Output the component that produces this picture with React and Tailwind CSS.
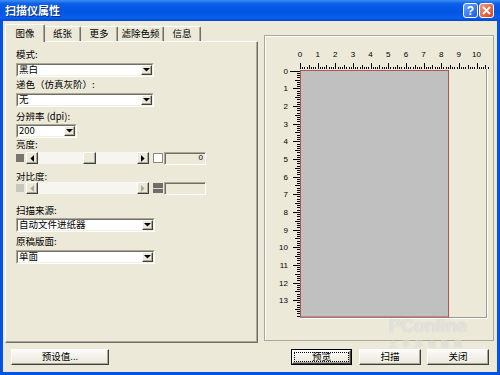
import React from "react";

const raised =
  "border border-t-white border-l-white border-r-[#404040] border-b-[#404040] shadow-[inset_-1px_-1px_0_#aca899]";
const sunken =
  "border border-t-[#aca899] border-l-[#aca899] border-r-white border-b-white shadow-[inset_1px_1px_0_#716f64]";

const Down = () => (
  <svg width="7" height="4" viewBox="0 0 7 4">
    <path d="M0 0h7L3.5 3.6z" fill="#000" />
  </svg>
);
const Left = ({ c }) => (
  <svg width="4" height="7" viewBox="0 0 4 7">
    <path d="M4 0v7L0.4 3.5z" fill={c} />
  </svg>
);
const Right = ({ c }) => (
  <svg width="4" height="7" viewBox="0 0 4 7">
    <path d="M0 0v7L3.6 3.5z" fill={c} />
  </svg>
);

function Select({ className, value }) {
  return (
    <div
      className={`h-[14px] border border-t-[#aca899] border-l-[#aca899] border-r-white border-b-white ${className}`}
    >
      <div className="h-full flex bg-white border border-t-[#716f64] border-l-[#716f64] border-r-[#f1efe2] border-b-[#f1efe2]">
        <div className="flex-1 flex items-center pl-[1px] text-[9.5px] leading-none text-black">
          {value}
        </div>
        <div
          className={`w-[11px] h-full flex items-center justify-center bg-[#ece9d8] ${raised}`}
        >
          <Down />
        </div>
      </div>
    </div>
  );
}

function Label({ className, children }) {
  return (
    <div className={`h-[12px] leading-[12px] text-[9.5px] text-black ${className}`}>
      {children}
    </div>
  );
}

function Slider({ disabled, className }) {
  const arrow = disabled ? "#aca899" : "#000";
  return (
    <div className={`flex items-center h-[12px] ${className}`}>
      <div
        className={`w-[8px] h-[8px] ${disabled ? "bg-[#c9c7bc]" : "bg-[#77756c]"}`}
      />
      <div
        className={`ml-[2px] w-[12px] h-[12px] flex items-center justify-center bg-[#ece9d8] ${raised}`}
      >
        <Left c={arrow} />
      </div>
      <div className="w-[99px] h-[12px] bg-[#f6f5f0] flex">
        {!disabled && (
          <div className={`ml-[45px] w-[13px] h-full bg-[#ece9d8] ${raised}`} />
        )}
      </div>
      <div
        className={`w-[12px] h-[12px] flex items-center justify-center bg-[#ece9d8] ${raised}`}
      >
        <Right c={arrow} />
      </div>
      {disabled ? (
        <div className="ml-[4px] w-[10px] h-[10px] bg-[#6f6d66] flex flex-col justify-center">
          <div className="h-[1px] bg-[#d6d4ca]" />
        </div>
      ) : (
        <div className="ml-[4px] w-[10px] h-[10px] bg-white border border-[#8c8a80]" />
      )}
      <div
        className={`ml-[1px] w-[42px] h-[13px] bg-[#ece9d8] flex items-center justify-end pr-[2px] text-[8px] leading-none font-['Liberation_Sans',sans-serif] ${sunken}`}
      >
        {disabled ? "" : "0"}
      </div>
    </div>
  );
}

function Btn({ className, children, focused }) {
  if (focused) {
    return (
      <div className={`h-[16px] border border-black flex ${className}`}>
        <div
          className={`flex-1 flex bg-[linear-gradient(#fbfbf8,#ebe8da)] ${raised}`}
        >
          <div className="flex-1 m-[1px] border border-dotted border-black flex items-center justify-center text-[9.5px] leading-none">
            {children}
          </div>
        </div>
      </div>
    );
  }
  return (
    <div
      className={`h-[16px] flex items-center justify-center text-[9.5px] leading-none bg-[linear-gradient(#fbfbf8,#ebe8da)] ${raised} ${className}`}
    >
      {children}
    </div>
  );
}

function Ruler() {
  const unit = 17.65;
  const hTicks = [];
  for (let i = 0; i <= 85; i++) {
    const x = Math.round(300 + (i * unit) / 8) + 0.5;
    const len = i % 8 === 0 ? 6 : i % 4 === 0 ? 4 : 2;
    hTicks.push(<line key={"h" + i} x1={x} x2={x} y1={69 - len} y2={69} />);
  }
  const vTicks = [];
  for (let j = 0; j <= 112; j++) {
    const y = Math.round(70.7 + (j * unit) / 8) + 0.5;
    if (y > 318) break;
    const len = j === 0 ? 10 : j % 8 === 0 ? 7 : j % 4 === 0 ? 5 : 3;
    vTicks.push(<line key={"v" + j} x1={300 - len} x2={300} y1={y} y2={y} />);
  }
  const hNums = [];
  for (let i = 0; i <= 10; i++) {
    hNums.push(
      <text key={"hn" + i} x={300 + i * unit} y={57} textAnchor="middle">
        {i}
      </text>
    );
  }
  const vNums = [];
  for (let j = 0; j <= 13; j++) {
    vNums.push(
      <text key={"vn" + j} x={288} y={70.7 + j * unit + 3} textAnchor="end">
        {j}
      </text>
    );
  }
  return (
    <svg width="228" height="304" viewBox="265 36 228 304" className="block">
      <line x1="487.5" x2="487.5" y1="69" y2="319" stroke="#ffffff" />
      <line x1="300" x2="488" y1="318.5" y2="318.5" stroke="#ffffff" />
      <line x1="486.5" x2="486.5" y1="69" y2="318" stroke="#9d9b91" />
      <line x1="300" x2="487" y1="317.5" y2="317.5" stroke="#9d9b91" />
      <rect
        x="300.5"
        y="70.5"
        width="148"
        height="246.5"
        fill="#c0c0c0"
        stroke="#b0554f"
      />
      <g stroke="#000" strokeWidth="1" shapeRendering="crispEdges">
        {hTicks}
        {vTicks}
      </g>
      <g
        fontSize="8"
        fill="#000"
        fontFamily="'Liberation Sans', 'DejaVu Sans', sans-serif"
      >
        {hNums}
        {vNums}
      </g>
    </svg>
  );
}

export default function App() {
  const tabBase =
    "h-[15px] flex items-center justify-center text-[9.5px] leading-none border-t border-t-white border-r border-r-[#716f64] rounded-tr-[2px] shadow-[inset_-1px_0_0_#aca899]";
  return (
    <div className="w-[500px] h-[375px] bg-[#0054e3] flex flex-col font-['Noto_Sans_CJK_SC','Liberation_Sans',sans-serif] text-black overflow-hidden">
      {/* Title bar */}
      <div className="h-[21px] shrink-0 flex items-center pl-[5px] pr-[6px] bg-[linear-gradient(180deg,#3c8ef6_0%,#0b5fe6_18%,#0055e3_55%,#0a60ec_85%,#0046cf_100%)]">
        <div className="text-[11px] font-bold text-white leading-none [text-shadow:1px_1px_0_#0a2a7a]">
          扫描仪属性
        </div>
        <div className="flex-1" />
        <div className="w-[15px] h-[15px] rounded-[3px] border border-white bg-[linear-gradient(135deg,#6aa6ff,#1a5be6)] flex items-center justify-center text-white text-[12px] font-bold leading-none font-['Liberation_Sans',sans-serif]">
          ?
        </div>
        <div className="ml-[1px] w-[15px] h-[15px] rounded-[3px] border border-white bg-[linear-gradient(135deg,#f39a7a,#d6421b)] flex items-center justify-center">
          <svg width="9" height="9" viewBox="0 0 9 9">
            <path d="M1 1L8 8M8 1L1 8" stroke="#fff" strokeWidth="1.8" />
          </svg>
        </div>
      </div>

      {/* Body */}
      <div className="flex-1 px-[3px] pb-[3px] flex">
        <div className="relative flex-1 bg-[#ece9d8] flex flex-col">
          <div className="flex pt-[3px]">
            {/* Left column */}
            <div className="ml-[2px] w-[253px] flex flex-col">
              <div className="h-[17px] flex items-end">
                <div className="relative z-10 mb-[-1px] w-[40px] h-[18px] bg-[#ece9d8] flex items-center justify-center text-[9.5px] leading-none border-t border-l border-t-white border-l-white border-r border-r-[#716f64] rounded-t-[2px] shadow-[inset_-1px_0_0_#aca899]">
                  图像
                </div>
                <div className={`w-[36px] ${tabBase}`}>纸张</div>
                <div className={`w-[37px] ${tabBase}`}>更多</div>
                <div className={`w-[46px] ${tabBase}`}>滤除色频</div>
                <div className={`w-[37px] ${tabBase}`}>信息</div>
              </div>
              <div className="h-[302px] border border-t-white border-l-white border-r-[#716f64] border-b-[#716f64] shadow-[inset_-1px_-1px_0_#aca899] pt-[6px] pl-[10px] flex flex-col">
                <Label>模式:</Label>
                <Select className="mt-[3px] w-[138px]" value="黑白" />
                <Label className="mt-[1px]">递色（仿真灰阶）:</Label>
                <Select className="mt-[3px] w-[138px]" value="无" />
                <Label className="mt-[3px]">分辨率 (dpi):</Label>
                <Select className="mt-[2px] w-[61px]" value="200" />
                <Label>亮度:</Label>
                <Slider className="mt-[2px]" />
                <Label className="mt-[6px]">对比度:</Label>
                <Slider disabled />
                <Label className="mt-[10px]">扫描来源:</Label>
                <Select className="mt-[2px] w-[139px]" value="自动文件进纸器" />
                <Label className="mt-[3px]">原稿版面:</Label>
                <Select className="mt-[3px] w-[139px]" value="单面" />
              </div>
            </div>
            {/* Right preview box */}
            <div className="ml-[6px] mt-[11px] w-[230px] h-[306px] border border-[#aca899] shadow-[inset_1px_1px_0_#ffffff]">
              <Ruler />
            </div>
          </div>

          {/* Bottom buttons */}
          <div className="mt-[6px] flex pl-[8px] pr-[8px]">
            <Btn className="w-[98px]">预设值...</Btn>
            <div className="flex-1" />
            <Btn focused className="w-[61px]">
              预览
            </Btn>
            <Btn className="ml-[7px] w-[62px]">扫描</Btn>
            <Btn className="ml-[6px] w-[62px]">关闭</Btn>
          </div>

          {/* Watermark */}
          <div className="pointer-events-none absolute left-[386px] top-[296px] flex flex-col items-center">
            <div className="h-[18px] text-[18px] leading-[18px] font-bold text-white/60 font-['Liberation_Sans',sans-serif] [text-shadow:0_0_1px_#b8b6ac]">
              PConline
            </div>
            <div className="mt-[4px] h-[9px] text-[8px] leading-[9px] tracking-[5px] text-white/60 [text-shadow:0_0_1px_#b8b6ac]">
              太平洋电脑网
            </div>
          </div>
        </div>
      </div>
    </div>
  );
}
